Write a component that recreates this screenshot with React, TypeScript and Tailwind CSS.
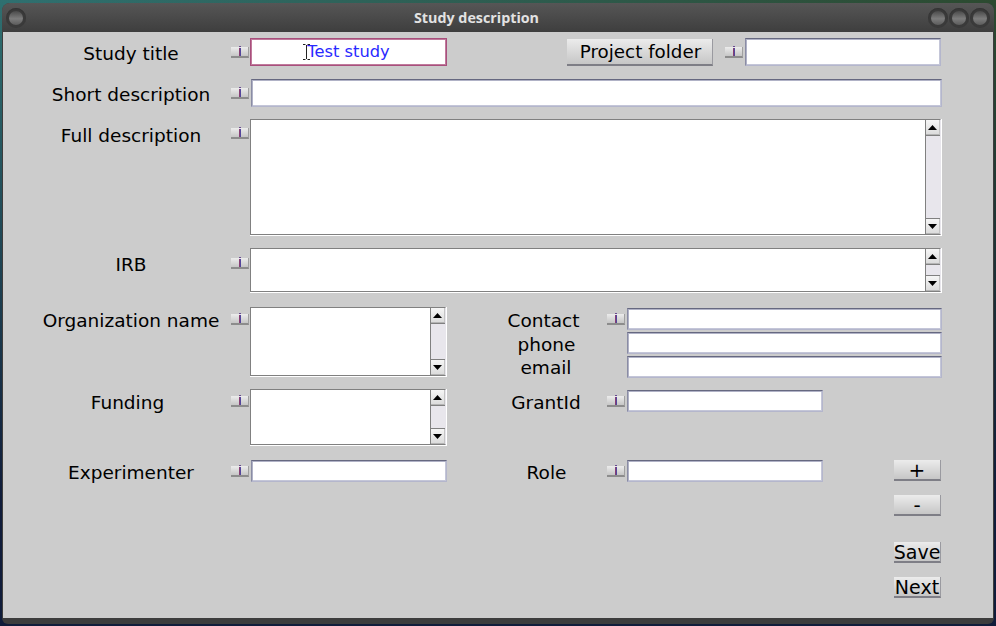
import React from "react";

const font = { fontFamily: '"DejaVu Sans", sans-serif' };

function Info({ top = 8 }: { top?: number }) {
  return (
    <div className="relative w-[18px] h-[11px] shrink-0 border-b-2 border-r border-b-[#8c8c8c] border-r-[#a0a0a0] bg-[linear-gradient(#ececec,#c6c6c6)]" style={{ marginTop: top }}>
      <span className="absolute left-[8px] top-[-1px] w-[2px] h-px bg-[#6a4a90]" />
      <span className="absolute left-[8px] top-[1px] w-[2px] h-[8px] bg-[linear-gradient(90deg,#a03a60,#3a4ab0)]" />
    </div>
  );
}

function Label({ w, children, className = "" }: { w: string; children: React.ReactNode; className?: string }) {
  return <div className={`${w} shrink-0 text-center text-[18.5px] leading-[24px] text-black ${className}`}>{children}</div>;
}

function Field({ w, h, children, focus }: { w: string; h: string; children?: React.ReactNode; focus?: boolean }) {
  return (
    <div
      className={`${w} ${h} shrink-0 bg-white border ${
        focus
          ? "border-[#a84f7c] shadow-[inset_1px_1px_0_#c07a9c,inset_-1px_-1px_0_#c07a9c]"
          : "border-t-[#666880] border-l-[#8a8ca4] border-r-[#b4b6cc] border-b-[#b4b6cc] shadow-[inset_1px_1px_0_#b0b2c6,inset_-1px_-1px_0_#c4c6d8]"
      } flex items-center justify-center`}
    >
      {children}
    </div>
  );
}

function Arrow({ up }: { up?: boolean }) {
  return (
    <svg width="9" height="5" viewBox="0 0 9 5" className="block">
      <path d={up ? "M4.5 0 L9 5 L0 5 Z" : "M0 0 L9 0 L4.5 5 Z"} fill="#000" />
    </svg>
  );
}

function ScrollBtn({ up }: { up?: boolean }) {
  return (
    <div className="h-[15px] flex items-center justify-center shrink-0 border-b border-r border-b-[#b4b4b4] border-r-[#c4c4c4] bg-[linear-gradient(#f6f6f6,#dcdcdc)]">
      <Arrow up={up} />
    </div>
  );
}

function ScrollBox({ w, h, className = "" }: { w: string; h: string; className?: string }) {
  return (
    <div className={`${w} ${h} shrink-0 border-r border-b border-r-white border-b-white ${className}`}>
      <div className="h-full flex bg-white border border-[#808080] border-r-[#e8e6ec]">
        <div className="flex-1" />
        <div className="w-[15px] flex flex-col border-l border-l-[#808080]">
          <ScrollBtn up />
          <div className="flex-1 bg-[#e8e6ec] border-t border-t-[#808080] border-b border-b-[#808080]" />
          <ScrollBtn />
        </div>
      </div>
    </div>
  );
}

function Btn({ w, h, children, className = "" }: { w: string; h: string; children: React.ReactNode; className?: string }) {
  return (
    <div className={`${w} ${h} shrink-0 flex items-center justify-center border-b-2 border-r border-b-[#7e7e86] border-r-[#9a9aa0] bg-[linear-gradient(#ececec,#c6c6c6)] leading-none text-black ${className}`}>
      {children}
    </div>
  );
}

function Knob() {
  return (
    <div className="w-[20px] h-[20px] rounded-full bg-[#3a3a3a] flex items-center justify-center shadow-[inset_0_1px_1px_#333]">
      <div className="w-[14px] h-[14px] rounded-full bg-[linear-gradient(#4a4a4a,#7c7c7c_55%,#5c5c5c)]" />
    </div>
  );
}

export default function App() {
  return (
    <div className="w-[996px] h-[626px] overflow-hidden pt-[3px] pl-[2px] bg-[linear-gradient(#0000,#101c3a_80%),linear-gradient(90deg,#2f7070,#2c4a30)]" style={font}>
      <div className="w-[992px] h-[621px] flex flex-col rounded-t-[8px] rounded-b-[6px] overflow-hidden bg-[#3c3c3c]">
        <div className="h-[29px] shrink-0 flex items-center px-[4px] bg-[linear-gradient(#565656,#3e3e3e)]">
          <Knob />
          <div className="flex-1 text-center text-[#e2e2e2] text-[14.3px] font-bold pr-px" style={{ fontFamily: '"Open Sans", sans-serif' }}>Study description</div>
          <div className="flex gap-px">
            <Knob />
            <Knob />
            <Knob />
          </div>
        </div>

        <div className="flex-1 mx-px bg-[#cccccc] pl-[28px] flex flex-col">
          <div className="flex h-[28px] mt-[6px]">
            <Label w="w-[200px]" className="mt-[4px]">Study title</Label>
            <Info top={9} />
            <div className="w-px" />
            <Field w="w-[197px]" h="h-[28px]" focus>
              <div className="relative text-[#2a2aff] text-[16.3px] leading-none">
                <svg width="7" height="16" viewBox="0 0 7 16" className="absolute left-[-4px] top-[0px]">
                  <path d="M0 .5h2.5M4.5 .5H7M3.5 1v14M0 15.5h2.5M4.5 15.5H7" stroke="#222" fill="none" />
                </svg>
                Test study
              </div>
            </Field>
            <Btn w="w-[146px]" h="h-[27px]" className="ml-[120px] mt-px text-[18.3px] pt-[2px] pl-[2px]">Project folder</Btn>
            <div className="w-[12px]" />
            <Info top={9} />
            <div className="w-[2px]" />
            <Field w="w-[196px]" h="h-[28px]" />
          </div>

          <div className="flex h-[28px] mt-[13px]">
            <Label w="w-[200px]" className="mt-[4px]">Short description</Label>
            <Info top={9} />
            <div className="w-[2px]" />
            <Field w="w-[691px]" h="h-[28px]" />
          </div>

          <div className="flex h-[117px] mt-[12px]">
            <Label w="w-[200px]" className="mt-[5px]">Full description</Label>
            <Info top={9} />
            <div className="w-px" />
            <ScrollBox w="w-[692px]" h="h-[117px]" />
          </div>

          <div className="flex h-[45px] mt-[12px]">
            <Label w="w-[200px]" className="mt-[5px]">IRB</Label>
            <Info top={10} />
            <div className="w-px" />
            <ScrollBox w="w-[692px]" h="h-[45px]" />
          </div>

          <div className="flex h-[71px] mt-[13px]">
            <Label w="w-[200px]" className="mt-[3px]">Organization name</Label>
            <Info top={8} />
            <div className="w-px" />
            <ScrollBox w="w-[197px]" h="h-[70px]" className="mt-px" />
            <div className="w-[33px]" />
            <div className="w-[127px] shrink-0 flex flex-col mt-[3px] text-center text-[18.5px] leading-[23.5px] text-black">
              <div>Contact</div>
              <div className="pl-[6px]">phone</div>
              <div className="pl-[5px]">email</div>
            </div>
            <Info top={8} />
            <div className="w-[2px]" />
            <div className="flex flex-col gap-[2px] mt-[2px]">
              <Field w="w-[315px]" h="h-[22px]" />
              <Field w="w-[315px]" h="h-[22px]" />
              <Field w="w-[315px]" h="h-[22px]" />
            </div>
          </div>

          <div className="flex h-[58px] mt-[11px]">
            <Label w="w-[200px]" className="mt-[3px] pr-[7px]">Funding</Label>
            <Info top={8} />
            <div className="w-px" />
            <ScrollBox w="w-[197px]" h="h-[57px]" className="mt-px" />
            <div className="w-[33px]" />
            <Label w="w-[127px]" className="mt-[3px] pl-[5px]">GrantId</Label>
            <Info top={8} />
            <div className="w-[2px]" />
            <div className="mt-[2px]">
              <Field w="w-[196px]" h="h-[22px]" />
            </div>
          </div>

          <div className="flex h-[22px] mt-[14px]">
            <Label w="w-[200px]" className="mt-px">Experimenter</Label>
            <Info top={6} />
            <div className="w-[2px]" />
            <Field w="w-[196px]" h="h-[22px]" />
            <div className="w-[33px]" />
            <Label w="w-[127px]" className="mt-px pl-[6px]">Role</Label>
            <Info top={6} />
            <div className="w-[2px]" />
            <Field w="w-[196px]" h="h-[22px]" />
            <Btn w="w-[47px]" h="h-[21px]" className="ml-[71px] text-[20px] pt-px">+</Btn>
          </div>

          <div className="flex flex-col items-end w-[910px]">
            <Btn w="w-[47px]" h="h-[21px]" className="mt-[13px] text-[20px]">-</Btn>
            <Btn w="w-[47px]" h="h-[21px]" className="mt-[26px] text-[19px] pt-px">Save</Btn>
            <Btn w="w-[47px]" h="h-[21px]" className="mt-[14px] text-[19px] pt-px">Next</Btn>
          </div>
        </div>
        <div className="h-[6px] shrink-0" />
      </div>
    </div>
  );
}
